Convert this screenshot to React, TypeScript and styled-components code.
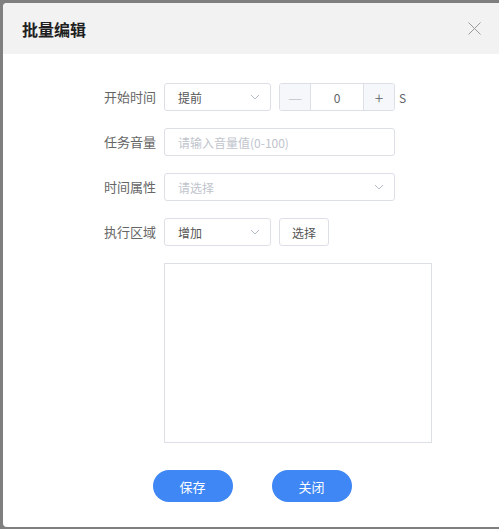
import React from 'react';
import styled, { createGlobalStyle } from 'styled-components';

const GlobalStyle = createGlobalStyle`
  html, body {
    margin: 0;
    padding: 0;
    background: #808080;
  }
  body {
    font-family: "Noto Sans CJK SC", "Noto Sans", sans-serif;
    font-size: 13px;
  }
`;

const Frame = styled.div`
  width: 499px;
  height: 529px;
  box-sizing: border-box;
  padding: 3px 0 2px 3px;
  background: #7f7f7f;
  display: flex;
`;

const Dialog = styled.div`
  flex: 1;
  background: #fff;
  border-radius: 4px 0 0 4px;
  overflow: hidden;
  display: flex;
  flex-direction: column;
`;

const Header = styled.div`
  height: 51px;
  flex: none;
  background: #f2f2f2;
  display: flex;
  align-items: center;
  justify-content: space-between;
  padding: 0 18px 0 19px;
`;

const Title = styled.h2`
  margin: 0;
  font-size: 16px;
  font-weight: 700;
  color: #1f1f1f;
  line-height: 20px;
`;

const CloseButton = styled.button`
  border: none;
  background: none;
  padding: 0;
  width: 13px;
  height: 13px;
  display: flex;
  cursor: pointer;
`;

const Body = styled.div`
  padding: 29px 0 0 0;
  display: flex;
  flex-direction: column;
`;

const Row = styled.div`
  display: flex;
  align-items: center;
  height: 28px;
  margin-bottom: 17px;
`;

const Label = styled.label`
  width: 161px;
  padding-right: 8px;
  box-sizing: border-box;
  text-align: right;
  color: #666;
  font-size: 13px;
  line-height: 28px;
`;

const Box = styled.div<{ $width: number }>`
  width: ${(p) => p.$width}px;
  height: 28px;
  box-sizing: border-box;
  border: 1px solid #dcdfe6;
  border-radius: 3px;
  display: flex;
  align-items: center;
  justify-content: space-between;
  padding: 0 10px 0 13px;
  font-size: 12px;
  color: #555;
  background: #fff;
`;

const Placeholder = styled.span`
  color: #c0c4cc;
`;

const Stepper = styled.div`
  margin-left: 8px;
  width: 116px;
  height: 28px;
  box-sizing: border-box;
  border: 1px solid #dcdfe6;
  border-radius: 3px;
  display: flex;
  overflow: hidden;
`;

const StepButton = styled.span<{ $disabled?: boolean }>`
  width: 30px;
  flex: none;
  background: #f5f7fa;
  display: flex;
  align-items: center;
  justify-content: center;
  color: ${(p) => (p.$disabled ? '#c0c4cc' : '#606266')};
  font-size: 16px;
  font-weight: 300;
`;

const StepValue = styled.span`
  flex: 1;
  border-left: 1px solid #dcdfe6;
  border-right: 1px solid #dcdfe6;
  display: flex;
  align-items: center;
  justify-content: center;
  color: #606266;
  font-size: 12px;
`;

const Unit = styled.span`
  margin-left: 4px;
  color: #606266;
  font-size: 12px;
`;

const PlainButton = styled.button`
  margin-left: 8px;
  width: 50px;
  height: 28px;
  box-sizing: border-box;
  border: 1px solid #dcdfe6;
  border-radius: 3px;
  background: #fff;
  color: #555;
  font-family: inherit;
  font-size: 12px;
  padding: 0;
`;

const AreaBox = styled.div`
  margin: 0 0 0 161px;
  width: 268px;
  height: 180px;
  box-sizing: border-box;
  border: 1px solid #dcdfe6;
`;

const Footer = styled.div`
  display: flex;
  justify-content: center;
  gap: 39px;
  margin-top: 27px;
  padding-left: 2px;
`;

const PrimaryButton = styled.button`
  width: 80px;
  height: 32px;
  border: none;
  border-radius: 16px;
  background: #3f87f5;
  color: #fff;
  font-family: inherit;
  font-size: 13px;
  padding: 0;
`;

const Chevron = () => (
  <svg width="10" height="6" viewBox="0 0 10 6" fill="none">
    <path d="M1 1l4 4 4-4" stroke="#b4bccc" strokeWidth="1" />
  </svg>
);

const CloseIcon = () => (
  <svg width="13" height="13" viewBox="0 0 13 13" fill="none">
    <path d="M0.5 0.5l12 12M12.5 0.5l-12 12" stroke="#9a9a9a" strokeWidth="1" />
  </svg>
);

const App = () => (
  <>
    <GlobalStyle />
    <Frame>
      <Dialog>
        <Header>
          <Title>批量编辑</Title>
          <CloseButton aria-label="关闭">
            <CloseIcon />
          </CloseButton>
        </Header>
        <Body>
          <Row>
            <Label>开始时间</Label>
            <Box $width={107}>
              <span>提前</span>
              <Chevron />
            </Box>
            <Stepper>
              <StepButton $disabled>—</StepButton>
              <StepValue>0</StepValue>
              <StepButton>+</StepButton>
            </Stepper>
            <Unit>S</Unit>
          </Row>
          <Row>
            <Label>任务音量</Label>
            <Box $width={231}>
              <Placeholder>请输入音量值(0-100)</Placeholder>
            </Box>
          </Row>
          <Row>
            <Label>时间属性</Label>
            <Box $width={231}>
              <Placeholder>请选择</Placeholder>
              <Chevron />
            </Box>
          </Row>
          <Row>
            <Label>执行区域</Label>
            <Box $width={107}>
              <span>增加</span>
              <Chevron />
            </Box>
            <PlainButton>选择</PlainButton>
          </Row>
          <AreaBox />
          <Footer>
            <PrimaryButton>保存</PrimaryButton>
            <PrimaryButton>关闭</PrimaryButton>
          </Footer>
        </Body>
      </Dialog>
    </Frame>
  </>
);

export default App;
